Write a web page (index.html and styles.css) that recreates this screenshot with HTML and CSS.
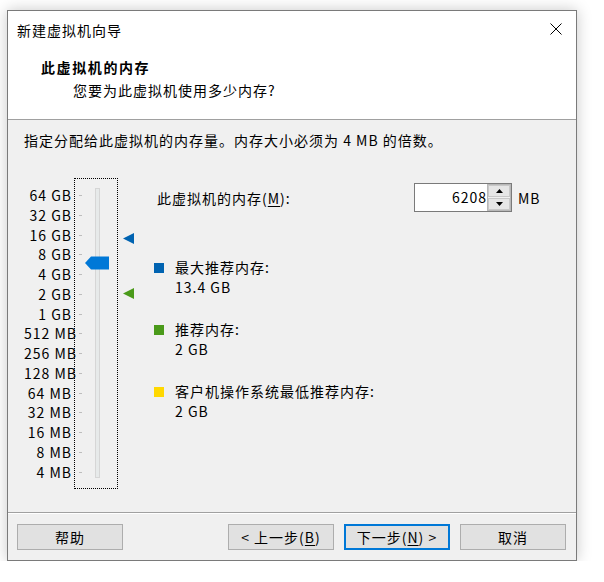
FILE: index.html
```html
<!DOCTYPE html>
<html lang="zh-CN">
<head>
<meta charset="utf-8">
<title>新建虚拟机向导</title>
<link rel="stylesheet" href="styles.css">
</head>
<body>
<div class="window">
  <div class="top">
    <div class="titlebar">
      <span class="title">新建虚拟机向导</span>
      <svg class="close" width="12" height="12" viewBox="0 0 12 12"><path d="M0.5 0.5L11.5 11.5M11.5 0.5L0.5 11.5" stroke="#000" stroke-width="1" fill="none"/></svg>
    </div>
    <div class="header">
      <div class="h-title">此虚拟机的内存</div>
      <div class="h-sub">您要为此虚拟机使用多少内存?</div>
    </div>
  </div>
  <div class="body">
    <div class="instr">指定分配给此虚拟机的内存量。内存大小必须为 4 MB 的倍数。</div>
    <div class="main">
      <div class="labels">
        <div>64 GB</div><div>32 GB</div><div>16 GB</div><div>8 GB</div><div>4 GB</div><div>2 GB</div><div>1 GB</div><div>512 MB</div><div>256 MB</div><div>128 MB</div><div>64 MB</div><div>32 MB</div><div>16 MB</div><div>8 MB</div><div>4 MB</div>
      </div>
      <div class="slider">
        <div class="ticks">
          <i></i><i></i><i></i><i></i><i></i><i></i><i></i><i></i><i></i><i></i><i></i><i></i><i></i><i></i><i></i>
        </div>
        <div class="track"></div>
        <svg class="thumb" width="24" height="14" viewBox="0 0 24 14"><polygon points="0,7 6,0.5 24,0.5 24,13.5 6,13.5" fill="#0078d7"/></svg>
      </div>
      <div class="markers">
        <svg class="mk mk-max" width="11" height="11" viewBox="0 0 11 11"><polygon points="0,5.5 11,0 11,11" fill="#0063b1"/></svg>
        <svg class="mk mk-rec" width="11" height="11" viewBox="0 0 11 11"><polygon points="0,5.5 11,0 11,11" fill="#4a9a1a"/></svg>
      </div>
      <div class="right">
        <div class="memrow">
          <span class="memlabel">此虚拟机的内存(<u>M</u>):</span>
          <div class="spinbox">
            <span class="val">6208</span>
            <div class="spin">
              <div class="sbtn"><svg width="7" height="4" viewBox="0 0 7 4"><polygon points="3.5,0 7,4 0,4" fill="#000"/></svg></div>
              <div class="sbtn"><svg width="7" height="4" viewBox="0 0 7 4"><polygon points="0,0 7,0 3.5,4" fill="#000"/></svg></div>
            </div>
          </div>
          <span class="unit">MB</span>
        </div>
        <div class="legend">
          <div class="item"><span class="sq sq-blue"></span><div><div>最大推荐内存:</div><div>13.4 GB</div></div></div>
          <div class="item"><span class="sq sq-green"></span><div><div>推荐内存:</div><div>2 GB</div></div></div>
          <div class="item"><span class="sq sq-yellow"></span><div><div>客户机操作系统最低推荐内存:</div><div>2 GB</div></div></div>
        </div>
      </div>
    </div>
  </div>
  <div class="footer">
    <button class="btn">帮助</button>
    <span class="spacer"></span>
    <button class="btn">&lt; 上一步(<u>B</u>)</button>
    <button class="btn primary">下一步(<u>N</u>) &gt;</button>
    <button class="btn">取消</button>
  </div>
</div>
</body>
</html>
```
FILE: styles.css
```css
html, body {
  margin: 0;
  padding: 0;
  background: #ffffff;
}
body {
  font-family: "Noto Sans CJK SC", "Noto Sans", sans-serif;
  font-size: 14px;
  letter-spacing: 1px;
  color: #000;
}
.window {
  margin: 10px 0 0 7px;
  width: 570px;
  box-sizing: border-box;
  border: 1px solid #7a7a7a;
  background: #f0f0f0;
  box-shadow: 0 0 14px rgba(0, 0, 0, 0.22);
  display: flex;
  flex-direction: column;
}
.top {
  background: #fff;
  height: 109px;
  box-sizing: border-box;
  border-bottom: 1px solid #a0a0a0;
  flex: none;
}
.titlebar {
  height: 38px;
  display: flex;
  align-items: center;
  justify-content: space-between;
  padding: 0 14px 0 9px;
}
.title { line-height: 38px; }
.close { margin-top: -2px; }
.header {
  padding: 8px 0 0 33px;
}
.h-title {
  font-weight: bold;
  line-height: 20px;
  letter-spacing: 1.6px;
}
.h-sub {
  line-height: 20px;
  margin-top: 3px;
  padding-left: 32px;
}
.body {
  height: 392px;
  flex: none;
  padding: 10px 0 0 16px;
  box-sizing: border-box;
}
.instr { line-height: 20px; }
.main {
  display: flex;
  margin-top: 28px;
}
.labels {
  width: 48px;
  padding-top: 8px;
  text-align: right;
  margin-right: 2px;
}
.labels div {
  height: 19.76px;
  line-height: 19.76px;
  white-space: nowrap;
}
.slider {
  position: relative;
  width: 44px;
  height: 311px;
  box-sizing: border-box;
  border: 1px dotted #000;
}
.ticks {
  display: flex;
  flex-direction: column;
  padding: 16px 0 0 4px;
}
.ticks i {
  display: block;
  width: 3px;
  height: 1px;
  background: #bdbdbd;
  margin-bottom: 18.76px;
}
.track {
  position: absolute;
  left: 20px;
  top: 9px;
  width: 3px;
  height: 288px;
  background: #e7eaea;
  border: 1px solid #d6d6d6;
}
.thumb {
  position: absolute;
  left: 10px;
  top: 77px;
}
.markers {
  position: relative;
  width: 36px;
}
.mk { position: absolute; left: 5px; }
.mk-max { top: 55px; }
.mk-rec { top: 110px; }
.right {
  display: flex;
  flex-direction: column;
}
.memrow {
  display: flex;
  align-items: center;
  margin-top: 5px;
  height: 29px;
}
.memlabel {
  width: 260px;
  padding-left: 3px;
  box-sizing: border-box;
}
.spinbox {
  width: 98px;
  height: 29px;
  box-sizing: border-box;
  border: 1px solid #7a7a7a;
  background: #fff;
  display: flex;
}
.val {
  flex: 1;
  text-align: right;
  line-height: 27px;
}
.spin {
  width: 22px;
  display: flex;
  flex-direction: column;
  justify-content: space-between;
  border: 1px solid #b8b8b8;
  background: #f0f0f0;
}
.sbtn {
  height: 12px;
  box-sizing: border-box;
  border: 1px solid #c8c8c8;
  background: #e6e6e6;
  display: flex;
  align-items: center;
  justify-content: center;
}
.unit {
  margin-left: 6px;
}
.legend {
  margin-top: 46px;
  display: flex;
  flex-direction: column;
  gap: 23px;
}
.item {
  display: flex;
  align-items: flex-start;
  line-height: 19.5px;
}
.sq {
  width: 10px;
  height: 10px;
  margin: 5px 11px 0 0;
  flex: none;
}
.sq-blue { background: #0063b1; }
.sq-green { background: #4a9a1a; }
.sq-yellow { background: #ffd800; }
.footer {
  height: 48px;
  flex: none;
  box-sizing: border-box;
  border-top: 1px solid #a0a0a0;
  box-shadow: inset 0 1px 0 #ffffff;
  display: flex;
  align-items: flex-start;
  padding: 11px 10px 0 9px;
  gap: 10px;
}
.spacer { flex: 1; }
.btn {
  width: 106px;
  height: 26px;
  flex: none;
  box-sizing: border-box;
  border: 1px solid #adadad;
  background: #e1e1e1;
  font-family: "Noto Sans CJK SC", "Noto Sans", sans-serif;
  font-size: 14px;
  letter-spacing: 1px;
  color: #000;
  padding: 0;
  line-height: 22px;
}
.btn.primary {
  border: 2px solid #0078d7;
}
u { text-decoration: underline; text-underline-offset: 2px; }
```
